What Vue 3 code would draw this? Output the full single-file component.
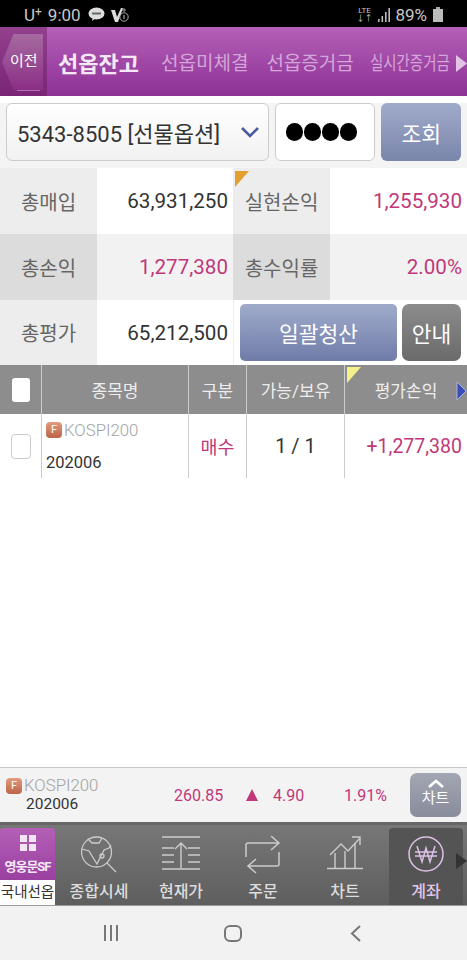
<script setup>
const summary = [
  [
    { label: '총매입', value: '63,931,250' },
    { label: '실현손익', value: '1,255,930', pink: true, flag: true },
  ],
  [
    { label: '총손익', value: '1,277,380', pink: true },
    { label: '총수익률', value: '2.00%', pink: true },
  ],
]
</script>

<template>
  <div class="page">
    <header class="status">
      <div class="st-left">
        <span class="carrier">U<sup>+</sup></span>
        <span>9:00</span>
        <svg class="st-chat" width="17" height="15" viewBox="0 0 17 15"><ellipse cx="8.500" cy="6.500" rx="8" ry="6" fill="#ddd"/><path d="M5 10l-1 4 4-3z" fill="#ddd"/><rect x="4" y="5.500" width="9" height="2" fill="#666"/></svg>
        <svg width="18" height="16" viewBox="0 0 18 16"><path d="M0 3h4l2 7 4-9h2L7 15H4z" fill="#ddd"/><circle cx="13" cy="10" r="4.200" fill="none" stroke="#aaa"/><path d="M13 8v4" stroke="#ccc"/><path d="M13 1v4M11 3h4" stroke="#999"/></svg>
      </div>
      <div class="st-right">
        <span class="lte">LTE<br/>↓↑</span>
        <svg width="12" height="14" viewBox="0 0 12 14"><rect x="0" y="11" width="1.600" height="3" fill="#bbb"/><rect x="3.500" y="8" width="1.600" height="6" fill="#bbb"/><rect x="7" y="4" width="1.600" height="10" fill="#bbb"/><rect x="10.400" y="0" width="1.600" height="14" fill="#bbb"/></svg>
        <span class="pct">89%</span>
        <svg width="10" height="15" viewBox="0 0 10 15"><rect x="3" y="0" width="4" height="2" fill="#aaa"/><rect x="0" y="2" width="10" height="13" fill="#bbb"/></svg>
      </div>
    </header>

    <nav class="tabs">
      <div class="back-wrap">
        <div class="back">이전</div>
        <span class="back-line"></span>
      </div>
      <div class="tab active">선옵잔고</div>
      <div class="tab t1">선옵미체결</div>
      <div class="tab t2">선옵증거금</div>
      <div class="tab t3"><span>실시간증거금</span></div>
      <svg class="tab-arrow" width="12" height="17" viewBox="0 0 12 17"><path d="M1 0l11 8.500L1 17z" fill="#e3c3e6"/></svg>
    </nav>

    <section class="query">
      <div class="account">
        <span>5343-8505 [선물옵션]</span>
        <svg width="20" height="12" viewBox="0 0 20 12"><path d="M2 2l8 8 8-8" fill="none" stroke="#4a5a9c" stroke-width="2.600"/></svg>
      </div>
      <div class="password"><i></i><i></i><i></i><i></i></div>
      <button class="btn blue search">조회</button>
    </section>

    <section class="summary">
      <div v-for="(row, r) in summary" :key="r" class="s-row" :class="{ alt: r === 1 }">
        <template v-for="cell in row" :key="cell.label">
          <div class="s-label">
            <span v-if="cell.flag" class="flag orange"></span>{{ cell.label }}
          </div>
          <div class="s-value" :class="{ pink: cell.pink, narrow: cell.label.length === 4 }">{{ cell.value }}</div>
        </template>
      </div>
      <div class="s-row last">
        <div class="s-label">총평가</div>
        <div class="s-value">65,212,500</div>
        <div class="s-actions">
          <button class="btn blue settle">일괄청산</button>
          <button class="btn gray guide">안내</button>
        </div>
      </div>
    </section>

    <section class="grid">
      <div class="g-head">
        <div class="c0"><span class="head-check"></span></div>
        <div class="c1">종목명</div>
        <div class="c2">구분</div>
        <div class="c3">가능/보유</div>
        <div class="c4">
          <span class="flag yellow"></span>평가손익
          <svg class="head-arrow" width="11" height="20" viewBox="0 0 11 20"><path d="M1 1l9 9-9 9z" fill="#3a4db5" stroke="#a8b2e0"/></svg>
        </div>
      </div>
      <div class="g-row">
        <div class="c0"><span class="row-check"></span></div>
        <div class="c1 name">
          <div class="nm"><span class="f-badge">F</span>KOSPI200</div>
          <div class="code">202006</div>
        </div>
        <div class="c2 pink buy">매수</div>
        <div class="c3 qty">1 / 1</div>
        <div class="c4 pink pl">+1,277,380</div>
      </div>
    </section>

    <div class="spacer"></div>

    <section class="ticker">
      <div class="t-name">
        <div class="nm"><span class="f-badge">F</span>KOSPI200</div>
        <div class="code">202006</div>
      </div>
      <span class="t-price pink">260.85</span>
      <span class="t-tri"></span>
      <span class="t-diff pink">4.90</span>
      <span class="t-rate pink">1.91%</span>
      <button class="chart-btn">
        <svg width="20" height="11" viewBox="0 0 20 11"><path d="M3 9l7-6 7 6" fill="none" stroke="#fff" stroke-width="2.600"/></svg>
        <span>차트</span>
      </button>
    </section>

    <nav class="menu">
      <div class="m-item home">
        <div class="home-top">
          <svg width="16" height="16" viewBox="0 0 16 16"><g fill="#f1e4f3"><rect width="7" height="7"/><rect x="9" width="7" height="7"/><rect y="9" width="7" height="7"/><rect x="9" y="9" width="7" height="7"/></g></svg>
          <div class="brand">영웅문SF</div>
        </div>
        <div class="home-label">국내선옵</div>
      </div>
      <div class="m-item">
        <svg width="36" height="37" viewBox="0 0 36 37" fill="none" stroke="#ccc" stroke-width="1.300"><circle cx="15.500" cy="16" r="15"/><path d="M26 27l9 9"/><path d="M1 13l7 2 3 5 5 8 7-14 5-2 2-3"/><path d="M7 3l4 4 7 0 3-5"/><circle cx="21" cy="20" r="2"/></svg>
        <span>종합시세</span>
      </div>
      <div class="m-item">
        <svg width="40" height="34" viewBox="0 0 40 34" fill="none" stroke="#ccc" stroke-width="1.400"><path d="M1 1h38M1 33h38M20 32V7M14 13l6-6 6 6M1 12h12M1 19h12M1 26h12M27 12h12M27 19h12M27 26h12"/></svg>
        <span>현재가</span>
      </div>
      <div class="m-item">
        <svg width="36" height="39" viewBox="0 0 36 39" fill="none" stroke="#ccc" stroke-width="1.500"><path d="M1 21V9a2 2 0 0 1 2-2h31M26 0l8 7-8 7"/><path d="M34 16v12a2 2 0 0 1-2 2H3M11 23l-8 7 8 7"/></svg>
        <span>주문</span>
      </div>
      <div class="m-item">
        <svg width="36" height="34" viewBox="0 0 36 34" fill="none" stroke="#ccc" stroke-width="1.400"><path d="M0 32.500h36M8 32V17M18 32V15M28 32V7"/><path d="M3 19L14 8l7 7L33 2"/><path d="M25 1h8v8"/></svg>
        <span>차트</span>
      </div>
      <div class="m-item current">
        <svg width="36" height="38" viewBox="0 0 36 38" fill="none" stroke="#dcc0e6" stroke-width="1.500"><circle cx="18" cy="19" r="17"/><path d="M9 11l5 16 4-14 4 14 5-16M7 17h22M7 21h22"/></svg>
        <span>계좌</span>
      </div>
      <svg class="menu-arrow" width="11" height="16" viewBox="0 0 11 16"><path d="M0 0l11 8-11 8z" fill="#333"/></svg>
    </nav>

    <footer class="softkeys">
      <svg width="16" height="16" viewBox="0 0 16 16"><path d="M2 0v16M8 0v16M14 0v16" stroke="#777" stroke-width="2"/></svg>
      <svg width="18" height="17" viewBox="0 0 18 17"><rect x="1" y="1" width="16" height="15" rx="5" fill="none" stroke="#777" stroke-width="2"/></svg>
      <svg width="11" height="17" viewBox="0 0 11 17"><path d="M10 1L2 8.500l8 7.500" fill="none" stroke="#777" stroke-width="2"/></svg>
    </footer>
  </div>
</template>

<style>
html, body { margin: 0; background: #fff; }
</style>

<style scoped>
.page {
  width: 467px;
  height: 960px;
  display: flex;
  flex-direction: column;
  overflow: hidden;
  font-family: Roboto, "Noto Sans CJK KR", sans-serif;
  color: #333;
  background: #fff;
}
.status {
  height: 27px;
  flex: none;
  background: #000;
  color: #c8c8c8;
  display: flex;
  justify-content: space-between;
  align-items: center;
  padding: 2px 24px 0 24px;
  box-sizing: border-box;
  font-size: 17px;
}
.st-left, .st-right { display: flex; align-items: center; gap: 6px; }
.st-left .st-chat { margin-left: 1px; }
.carrier sup { font-size: 12px; line-height: 0; vertical-align: 5px; }
.lte { font-size: 8px; line-height: 8px; text-align: center; }
.pct { margin-left: -1px; }
.tabs {
  height: 69px;
  flex: none;
  display: flex;
  align-items: center;
  position: relative;
  background: linear-gradient(#b45fb7, #8d3196);
  white-space: nowrap;
}
.back-wrap {
  width: 47px;
  height: 69px;
  flex: none;
  background: linear-gradient(#93408f, #7a2576);
  position: relative;
}
.back {
  width: 41px;
  height: 56px;
  margin: 7px 0 0 2px;
  box-sizing: border-box;
  padding-left: 8px;
  clip-path: polygon(28% 0, 100% 0, 100% 100%, 28% 100%, 0 50%);
  background: linear-gradient(#a56a9f, #8c2e86);
  color: #fff;
  font-size: 15px;
  line-height: 54px;
}
.back-line { position: absolute; left: 17px; bottom: 5px; width: 23px; height: 1px; background: #b374ae; }
.tab { color: #d5a7d8; font-size: 19px; }
.tab.active { color: #f6e9f7; font-size: 22px; font-weight: 700; margin-left: 11px; }
.t1 { margin-left: 22px; }
.t2 { margin-left: 18px; }
.t3 { margin-left: 16px; width: 87px; }
.t3 span { display: inline-block; transform: scaleX(0.76); transform-origin: left center; }
.tab-arrow { position: absolute; right: 0; top: 28px; }
.query {
  height: 72px;
  flex: none;
  box-sizing: border-box;
  padding: 7px 6px 7px 6px;
  display: flex;
  gap: 6px;
  background: linear-gradient(#fff 7px, #f4f4f4 7px);
}
.account {
  width: 264px;
  box-sizing: border-box;
  border: 1px solid #ccc;
  border-radius: 6px;
  background: linear-gradient(#fff, #f1f1f1);
  display: flex;
  align-items: center;
  justify-content: space-between;
  padding: 0 8px 0 10px;
  font-size: 22px;
  color: #333;
  white-space: nowrap;
}
.password {
  width: 101px;
  box-sizing: border-box;
  border: 1px solid #ccc;
  border-radius: 6px;
  background: #fff;
  display: flex;
  align-items: center;
  padding-left: 10px;
  gap: 0.500px;
}
.password i { width: 17.500px; height: 17.500px; border-radius: 50%; background: #000; display: block; }
.btn {
  border: 0;
  padding: 0;
  font-family: inherit;
  color: #fff;
  font-size: 21.500px;
}
.blue { background: linear-gradient(#a0abcb, #7a85ab); }
.gray { background: linear-gradient(#8c8c8c, #6a6a6a); }
.search { width: 80px; border-radius: 6px; }
.summary { display: flex; flex-direction: column; flex: none; }
.s-row { height: 66px; display: flex; background: #fff; }
.s-row.last { height: 65px; }
.s-label {
  width: 97px;
  flex: none;
  background: #ededed;
  color: #666;
  font-size: 20px;
  display: flex;
  align-items: center;
  justify-content: center;
  position: relative;
}
.s-value {
  width: 136px;
  flex: none;
  box-sizing: border-box;
  padding-right: 5px;
  text-align: right;
  font-size: 20.600px;
  line-height: 66px;
  color: #333;
}
.s-value.narrow { width: 137px; }
.s-row.alt .s-label { background: #dcdcdc; }
.s-row.alt .s-value { background: #f2f2f2; }
.pink { color: #c0387a !important; }
.flag { position: absolute; left: 2px; top: 3px; width: 14px; height: 16px; clip-path: polygon(0 0, 100% 0, 0 100%); }
.orange { background: #e3a02f; }
.yellow { background: #f6f08c; }
.s-actions {
  flex: 1;
  display: flex;
  gap: 5px;
  padding: 4px 6px 4px 6px;
  box-sizing: border-box;
  border-left: 1px solid #eee;
}
.settle { flex: 1; border-radius: 5px; background: linear-gradient(#a0abcb, #6f7ca8); }
.guide { width: 59px; border-radius: 7px; }
.grid { display: flex; flex-direction: column; flex: none; }
.g-head, .g-row { display: flex; }
.g-head { height: 49px; background: #8d8d8d; color: #eee; font-size: 17px; }
.g-row { height: 64px; font-size: 18px; color: #333; }
.c0 { width: 41px; }
.c1 { width: 147px; }
.c2 { width: 58px; }
.c3 { width: 98px; }
.c4 { width: 123px; }
.c0, .c1, .c2, .c3, .c4 {
  box-sizing: border-box;
  display: flex;
  align-items: center;
  justify-content: center;
  position: relative;
  white-space: nowrap;
}
.c1, .c2, .c3, .c4 { border-left: 1px solid #ccc; }
.head-check { width: 18px; height: 24px; background: #fff; border-radius: 3px; }
.row-check { width: 20px; height: 25px; border: 1px solid #ccc; border-radius: 4px; box-sizing: border-box; background: #fff; }
.head-arrow { position: absolute; right: 0; top: 16px; }
.c4 .flag { top: 2px; left: 2px; }
.name { flex-direction: column; align-items: flex-start; padding-left: 4px; justify-content: flex-start; }
.nm { display: flex; align-items: center; color: #a2a2a2; font-size: 16.800px; line-height: 18px; font-weight: 300; }
.f-badge {
  width: 16px;
  height: 16px;
  margin-right: 2px;
  border-radius: 4px;
  background: linear-gradient(#e39a80, #bb6448);
  color: #fff;
  font-size: 11px;
  font-weight: 400;
  line-height: 16px;
  text-align: center;
}
.name .nm { margin-top: 7px; }
.code { color: #333; font-size: 16.500px; }
.name .code { margin-top: 15px; line-height: 18px; }
.buy { font-size: 18.500px; }
.qty { font-size: 20px; }
.pl { justify-content: flex-end; padding-right: 5px; font-size: 19.500px; }
.spacer { flex: 1; background: #fff; }
.ticker {
  height: 55px;
  flex: none;
  box-sizing: border-box;
  border-top: 1px solid #c8c8c8;
  background: #f3f3f3;
  display: flex;
  align-items: center;
  position: relative;
  padding-left: 6px;
  font-size: 16px;
}
.t-name { width: 168px; flex: none; }
.t-name .code { line-height: 19px; font-size: 15.500px; padding-left: 20px; }
.t-name .nm { line-height: 19px; }
.t-price { width: 72px; }
.t-tri { width: 0; height: 0; border: 6px solid transparent; border-top: 0; border-bottom: 12px solid #c0387a; margin-right: 15px; }
.t-diff { width: 71px; }
.t-rate { width: 66px; }
.chart-btn {
  width: 51px;
  height: 44px;
  border: 0;
  border-radius: 7px;
  background: linear-gradient(#a3a7b3, #888c9b);
  color: #fff;
  font-family: inherit;
  font-size: 15px;
  padding: 5px 0 0;
  display: flex;
  flex-direction: column;
  align-items: center;
  line-height: 18px;
}
.chart-btn svg { flex: none; }
.menu {
  height: 84px;
  flex: none;
  box-sizing: border-box;
  display: flex;
  position: relative;
  background: linear-gradient(#777, #5e5e5e);
  border-top: 3px solid #666;
  padding-top: 3px;
  border-bottom: 1px solid #999;
}
.m-item {
  width: 82px;
  flex: none;
  display: flex;
  flex-direction: column;
  align-items: center;
  justify-content: space-between;
  color: #ddd;
  font-size: 16px;
  line-height: 22px;
  font-weight: 500;
  box-sizing: border-box;
  padding: 8px 0 2px;
  white-space: nowrap;
}
.m-item:nth-child(2) { margin-left: 3px; }
.m-item.home {
  width: 55px;
  padding: 0;
  font-weight: 400;
  background: linear-gradient(#b45fb7, #8d3196);
  border-radius: 4px 4px 0 0;
}
.home-top { display: flex; flex-direction: column; align-items: center; padding-top: 7px; color: #f5e9f7; }
.brand { font-size: 13px; line-height: 20px; font-weight: 700; letter-spacing: -1px; white-space: nowrap; margin-top: 6px; }
.home-label { width: 100%; background: #fff; color: #333; font-size: 14.500px; line-height: 25px; text-align: center; white-space: nowrap; }
.m-item.current { width: 74px; margin-left: 3px; background: #545454; border-radius: 4px 4px 0 0; color: #e2c5ea; padding-top: 7px; }
.menu-arrow { position: absolute; right: 0; top: 28px; }
.softkeys {
  flex: none;
  height: 54px;
  background: #f2f2f2;
  display: flex;
  align-items: center;
  justify-content: flex-start;
  padding-left: 103px;
  gap: 105px;
}
.softkeys svg:last-child { margin-left: 3px; }
</style>
